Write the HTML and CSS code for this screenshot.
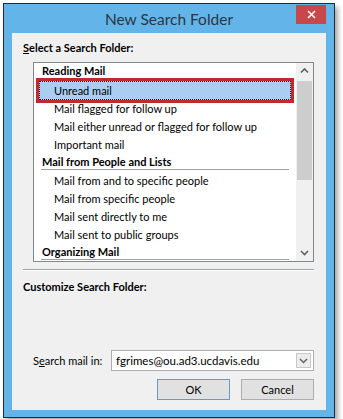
FILE: index.html
```html
<!DOCTYPE html>
<html lang="en">
<head>
  <meta charset="UTF-8">
  <meta name="viewport" content="width=device-width, initial-scale=1.0">
  <title>New Search Folder</title>
  <link rel="stylesheet" href="styles.css">
</head>
<body>
  <div class="window">
    <div class="titlebar">
      <span></span>
      <span class="title">New Search Folder</span>
      <button class="close" type="button" aria-label="Close">
        <svg width="9" height="9" viewBox="0 0 9 9">
          <path d="M1 1L8 8M8 1L1 8" stroke="#fff" stroke-width="1.6" fill="none"/>
        </svg>
      </button>
    </div>

    <div class="content">
      <div class="label"><u>S</u>elect a Search Folder:</div>

      <div class="listbox">
        <div class="list">
          <div class="row header">Reading Mail</div>
          <div class="row item selected">Unread mail</div>
          <div class="row item">Mail flagged for follow up</div>
          <div class="row item">Mail either unread or flagged for follow up</div>
          <div class="row item">Important mail</div>
          <div class="row header">Mail from People and Lists</div>
          <div class="row item">Mail from and to specific people</div>
          <div class="row item">Mail from specific people</div>
          <div class="row item">Mail sent directly to me</div>
          <div class="row item">Mail sent to public groups</div>
          <div class="row header">Organizing Mail</div>
        </div>
        <div class="scrollbar">
          <svg class="arrow" width="17" height="17" viewBox="0 0 17 17">
            <path d="M5 9.5L8.5 6L12 9.5" stroke="#606060" stroke-width="1.6" fill="none"/>
          </svg>
          <div class="track">
            <div class="thumb"></div>
          </div>
          <svg class="arrow" width="17" height="17" viewBox="0 0 17 17">
            <path d="M5 7L8.5 10.5L12 7" stroke="#606060" stroke-width="1.6" fill="none"/>
          </svg>
        </div>
      </div>

      <div class="separator"></div>

      <div class="label">Customize Search Folder:</div>

      <div class="spacer"></div>

      <div class="search-row">
        <span class="search-label">S<u>e</u>arch mail in:</span>
        <div class="combo">
          <span class="combo-value">fgrimes@ou.ad3.ucdavis.edu</span>
          <span class="combo-button">
            <svg width="9" height="6" viewBox="0 0 9 6">
              <path d="M1 1L4.5 4.5L8 1" stroke="#606060" stroke-width="1.5" fill="none"/>
            </svg>
          </span>
        </div>
      </div>

      <div class="buttons">
        <button class="btn default" type="button">OK</button>
        <button class="btn" type="button">Cancel</button>
      </div>
    </div>
  </div>
</body>
</html>
```

FILE: styles.css
```css
body {
  margin: 0;
  padding: 0;
  background-color: #fff;
  font-family: Lato, "Noto Sans", sans-serif;
  font-size: 11px;
  color: #000;
}

.window {
  margin: 3px;
  width: 314px;
  height: 406px;
  border: 1px solid #2a2a2a;
  background-color: #63b5e9;
  box-shadow: 3px 4px 5px rgba(0, 0, 0, 0.35);
  display: flex;
  flex-direction: column;
  padding: 0 8px 7px 8px;
}

.titlebar {
  height: 29px;
  display: grid;
  grid-template-columns: 1fr auto 1fr;
  align-items: start;
}

.title {
  font-size: 15.5px;
  color: #2e3540;
  line-height: 18px;
  padding-top: 6px;
}

.close {
  justify-self: end;
  margin-top: 1px;
  width: 30px;
  height: 19px;
  border: none;
  padding: 0;
  background-color: #c7474b;
  display: flex;
  align-items: center;
  justify-content: center;
}

.content {
  flex: 1;
  background-color: #f0f0f0;
  display: flex;
  flex-direction: column;
  padding: 7px 12px 10px 11px;
}

.label {
  font-weight: bold;
  line-height: 16px;
}

.listbox {
  margin: 6px 0 0 10px;
  height: 198px;
  border: 1px solid #828790;
  background-color: #fff;
  display: flex;
  overflow: hidden;
}

.list {
  flex: 1;
  overflow: hidden;
}

.row {
  white-space: nowrap;
}

.header {
  font-weight: bold;
  line-height: 15px;
  margin: 0 7px 2px 7px;
  padding-left: 1px;
  border-bottom: 1px solid #a0a0a0;
}

.item {
  line-height: 18px;
  padding-left: 20px;
}

.item.selected {
  margin: 0 5px;
  line-height: 17px;
  padding-left: 14px;
  background-color: #aacef2;
  border: 1px dotted #222;
  outline: 3px solid #c5272f;
}

.scrollbar {
  width: 17px;
  background-color: #f0f0f0;
  display: flex;
  flex-direction: column;
}

.arrow {
  display: block;
  flex: none;
}

.track {
  flex: 1;
}

.thumb {
  margin: 1px 1px 0 1px;
  height: 99px;
  background-color: #cdcdcd;
}

.separator {
  margin: 7px 0 0 0;
  border-top: 1px solid #a0a0a0;
  border-bottom: 1px solid #fff;
}

.separator + .label {
  margin-top: 8px;
}

.spacer {
  flex: 1;
}

.search-row {
  display: flex;
  align-items: center;
  margin-left: 10px;
  gap: 4px;
}

.search-label {
  flex: 1;
  white-space: nowrap;
}

.combo {
  width: 201px;
  height: 19px;
  border: 1px solid #abadb3;
  background-color: #fff;
  display: flex;
  align-items: center;
}

.combo-value {
  flex: 1;
  padding-left: 4px;
  font-size: 11.5px;
}

.combo-button {
  width: 15px;
  height: 15px;
  margin-right: 2px;
  border: 1px solid #c8c8c8;
  background-color: #ececec;
  display: flex;
  align-items: center;
  justify-content: center;
  box-sizing: border-box;
}

.buttons {
  display: flex;
  justify-content: flex-end;
  gap: 11px;
  margin-top: 8px;
}

.btn {
  width: 73px;
  height: 21px;
  padding: 0;
  font-family: inherit;
  font-size: 11px;
  color: #000;
  background-color: #e1e1e1;
  border: 1px solid #adadad;
}

.btn.default {
  border-color: #6f95c0;
}
```
